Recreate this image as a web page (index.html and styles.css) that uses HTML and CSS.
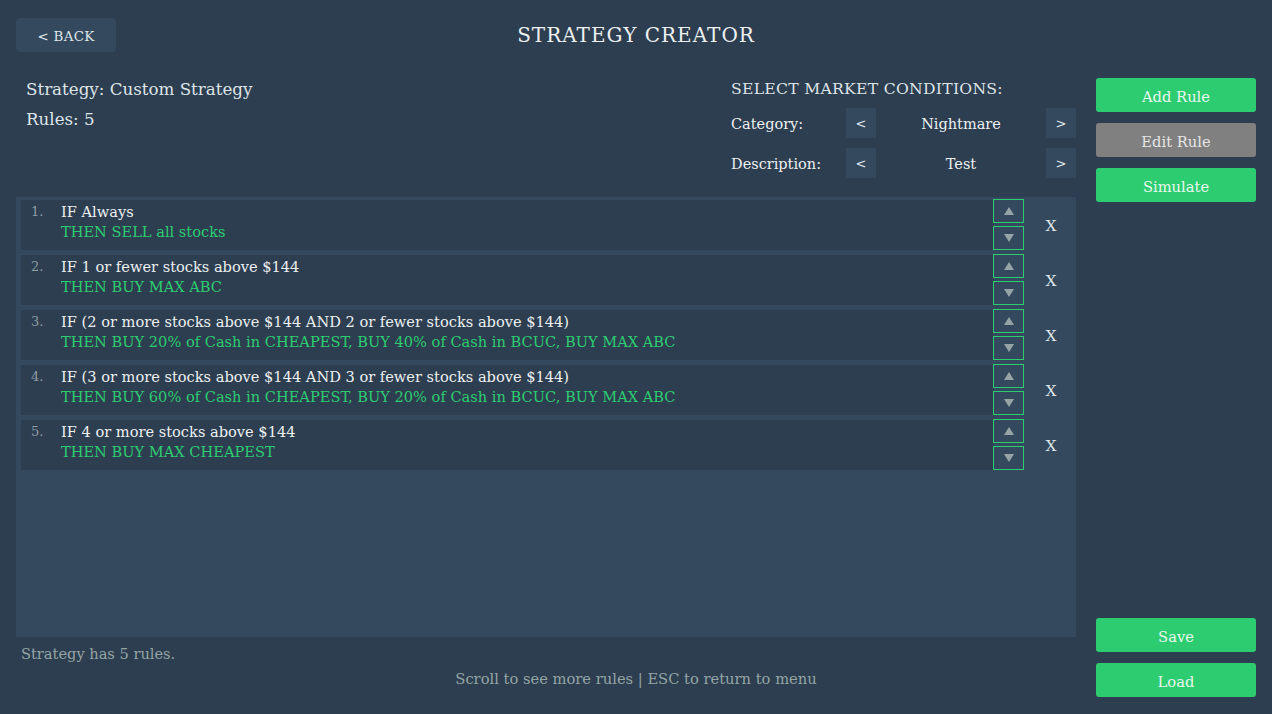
FILE: index.html
```html
<!DOCTYPE html>
<html lang="en">
<head>
<meta charset="utf-8">
<title>Strategy Creator</title>
<link rel="stylesheet" href="styles.css">
</head>
<body>
<div class="screen">
  <header class="topbar">
    <button class="back">&lt; BACK</button>
    <h1 class="title">STRATEGY CREATOR</h1>
    <span class="topbar-spacer"></span>
  </header>

  <main class="workspace">
    <div class="overview">
      <div class="summary">
        <p class="summary-line">Strategy: Custom Strategy</p>
        <p class="summary-line">Rules: 5</p>
      </div>
      <div class="market">
        <h2 class="market-title">SELECT MARKET CONDITIONS:</h2>
        <div class="picker">
          <span class="picker-label">Category:</span>
          <button class="step">&lt;</button>
          <span class="picker-value">Nightmare</span>
          <button class="step">&gt;</button>
        </div>
        <div class="picker">
          <span class="picker-label">Description:</span>
          <button class="step">&lt;</button>
          <span class="picker-value">Test</span>
          <button class="step">&gt;</button>
        </div>
      </div>
    </div>

    <section class="rules-panel">
      <div class="rule">
        <div class="rule-body">
          <span class="rule-num">1.</span>
          <div class="rule-text">
            <p class="rule-if">IF Always</p>
            <p class="rule-then">THEN SELL all stocks</p>
          </div>
        </div>
        <div class="rule-order">
          <button class="order-btn"><svg viewBox="0 0 10 8" width="10" height="8"><path d="M5 0 L10 8 L0 8 Z"/></svg></button>
          <button class="order-btn"><svg viewBox="0 0 10 8" width="10" height="8"><path d="M0 0 L10 0 L5 8 Z"/></svg></button>
        </div>
        <button class="rule-delete">X</button>
      </div>

      <div class="rule">
        <div class="rule-body">
          <span class="rule-num">2.</span>
          <div class="rule-text">
            <p class="rule-if">IF 1 or fewer stocks above $144</p>
            <p class="rule-then">THEN BUY MAX ABC</p>
          </div>
        </div>
        <div class="rule-order">
          <button class="order-btn"><svg viewBox="0 0 10 8" width="10" height="8"><path d="M5 0 L10 8 L0 8 Z"/></svg></button>
          <button class="order-btn"><svg viewBox="0 0 10 8" width="10" height="8"><path d="M0 0 L10 0 L5 8 Z"/></svg></button>
        </div>
        <button class="rule-delete">X</button>
      </div>

      <div class="rule">
        <div class="rule-body">
          <span class="rule-num">3.</span>
          <div class="rule-text">
            <p class="rule-if">IF (2 or more stocks above $144 AND 2 or fewer stocks above $144)</p>
            <p class="rule-then">THEN BUY 20% of Cash in CHEAPEST, BUY 40% of Cash in BCUC, BUY MAX ABC</p>
          </div>
        </div>
        <div class="rule-order">
          <button class="order-btn"><svg viewBox="0 0 10 8" width="10" height="8"><path d="M5 0 L10 8 L0 8 Z"/></svg></button>
          <button class="order-btn"><svg viewBox="0 0 10 8" width="10" height="8"><path d="M0 0 L10 0 L5 8 Z"/></svg></button>
        </div>
        <button class="rule-delete">X</button>
      </div>

      <div class="rule">
        <div class="rule-body">
          <span class="rule-num">4.</span>
          <div class="rule-text">
            <p class="rule-if">IF (3 or more stocks above $144 AND 3 or fewer stocks above $144)</p>
            <p class="rule-then">THEN BUY 60% of Cash in CHEAPEST, BUY 20% of Cash in BCUC, BUY MAX ABC</p>
          </div>
        </div>
        <div class="rule-order">
          <button class="order-btn"><svg viewBox="0 0 10 8" width="10" height="8"><path d="M5 0 L10 8 L0 8 Z"/></svg></button>
          <button class="order-btn"><svg viewBox="0 0 10 8" width="10" height="8"><path d="M0 0 L10 0 L5 8 Z"/></svg></button>
        </div>
        <button class="rule-delete">X</button>
      </div>

      <div class="rule">
        <div class="rule-body">
          <span class="rule-num">5.</span>
          <div class="rule-text">
            <p class="rule-if">IF 4 or more stocks above $144</p>
            <p class="rule-then">THEN BUY MAX CHEAPEST</p>
          </div>
        </div>
        <div class="rule-order">
          <button class="order-btn"><svg viewBox="0 0 10 8" width="10" height="8"><path d="M5 0 L10 8 L0 8 Z"/></svg></button>
          <button class="order-btn"><svg viewBox="0 0 10 8" width="10" height="8"><path d="M0 0 L10 0 L5 8 Z"/></svg></button>
        </div>
        <button class="rule-delete">X</button>
      </div>
    </section>

    <p class="status">Strategy has 5 rules.</p>
    <p class="hint">Scroll to see more rules | ESC to return to menu</p>

    <aside class="actions">
      <button class="action action-green">Add Rule</button>
      <button class="action action-grey">Edit Rule</button>
      <button class="action action-green">Simulate</button>
      <button class="action action-green action-push">Save</button>
      <button class="action action-green">Load</button>
    </aside>
  </main>
</div>
</body>
</html>
```

FILE: styles.css
```css
* {
  box-sizing: border-box;
}

html, body {
  margin: 0;
  padding: 0;
}

body {
  background: #2c3e50;
  color: #ecf0f1;
  font-family: "DejaVu Serif", "Liberation Serif", serif;
  width: 1272px;
  height: 714px;
  overflow: hidden;
}

p, h1, h2 {
  margin: 0;
  font-weight: normal;
}

button {
  font-family: inherit;
  border: none;
  padding: 0;
  cursor: pointer;
}

/* ---------- top bar ---------- */
.topbar {
  display: grid;
  grid-template-columns: 1fr auto 1fr;
  align-items: center;
  padding: 18px 16px 0;
  height: 78px;
  align-content: start;
}

.back {
  width: 100px;
  height: 34px;
  padding-top: 2px;
  background: #34495e;
  color: #dfe6ea;
  border-radius: 4px;
  font-size: 13.4px;
  letter-spacing: 0.3px;
  justify-self: start;
}

.title {
  font-size: 20px;
  letter-spacing: 1px;
  color: #ecf0f1;
  line-height: 34px;
}

/* ---------- workspace grid ---------- */
.workspace {
  display: grid;
  grid-template-columns: 1060px 160px;
  grid-template-rows: 119px 440px 32px 28px;
  column-gap: 20px;
  padding: 0 16px;
}

.overview {
  grid-column: 1;
  grid-row: 1;
  display: flex;
  justify-content: space-between;
}

.summary {
  padding-left: 10px;
  display: flex;
  flex-direction: column;
  gap: 8px;
}

.summary-line {
  font-size: 16.7px;
  line-height: 22px;
  color: #dfe4e8;
}

.market {
  width: 345px;
  display: flex;
  flex-direction: column;
  gap: 10px;
}

.market-title {
  font-size: 15.6px;
  line-height: 22px;
  letter-spacing: 0.3px;
  color: #dfe4e8;
  margin-bottom: -2px;
}

.picker {
  display: flex;
  align-items: center;
  height: 30px;
  font-size: 14.5px;
  color: #ecf0f1;
}

.picker-label {
  width: 115px;
  padding-top: 1px;
}

.step {
  width: 30px;
  height: 30px;
  background: #34495e;
  color: #dfe6ea;
  font-size: 13px;
}

.picker-value {
  width: 170px;
  text-align: center;
  padding-top: 1px;
}

/* ---------- rules list ---------- */
.rules-panel {
  grid-column: 1;
  grid-row: 2;
  background: #34495e;
  padding: 3px 0 0 5px;
  display: flex;
  flex-direction: column;
  gap: 5px;
}

.rule {
  display: grid;
  grid-template-columns: 972px 31px 1fr;
  height: 50px;
}

.rule-body {
  background: #2c3e50;
  display: flex;
  padding: 2px 0 0 10px;
}

.rule-num {
  width: 30px;
  font-size: 13px;
  line-height: 20px;
  color: #8e9ba3;
}

.rule-text {
  font-size: 14.6px;
  line-height: 20px;
}

.rule-if {
  color: #ecf0f1;
}

.rule-then {
  color: #2ecc71;
}

.rule-order {
  display: flex;
  flex-direction: column;
  gap: 3px;
  margin-top: -1px;
}

.order-btn {
  height: 24px;
  width: 31px;
  background: #34495e;
  border: 1px solid #2ecc71;
  display: flex;
  align-items: center;
  justify-content: center;
}

.order-btn svg {
  fill: #95a5a6;
}

.rule-delete {
  background: transparent;
  color: #dfe6ea;
  font-size: 15.5px;
  align-self: center;
  justify-self: center;
  margin: 2px 0 0 2px;
}

/* ---------- footer text ---------- */
.status {
  grid-column: 1;
  grid-row: 3;
  padding: 7px 0 0 5px;
  font-size: 14.6px;
  line-height: 20px;
  color: #95a5a6;
}

.hint {
  grid-column: 1 / -1;
  grid-row: 4;
  text-align: center;
  font-size: 14.7px;
  line-height: 20px;
  color: #95a5a6;
}

/* ---------- action buttons ---------- */
.action {
  height: 34px;
  border-radius: 3px;
  font-size: 14.7px;
  color: #e8f7ee;
  padding-top: 2px;
}

.actions {
  grid-column: 2;
  grid-row: 1 / -1;
  display: flex;
  flex-direction: column;
  gap: 11px;
}

.action-green {
  background: #2ecc71;
}

.action-grey {
  background: #808080;
  color: #e6e6e6;
}

.action-push {
  margin-top: auto;
}
```
